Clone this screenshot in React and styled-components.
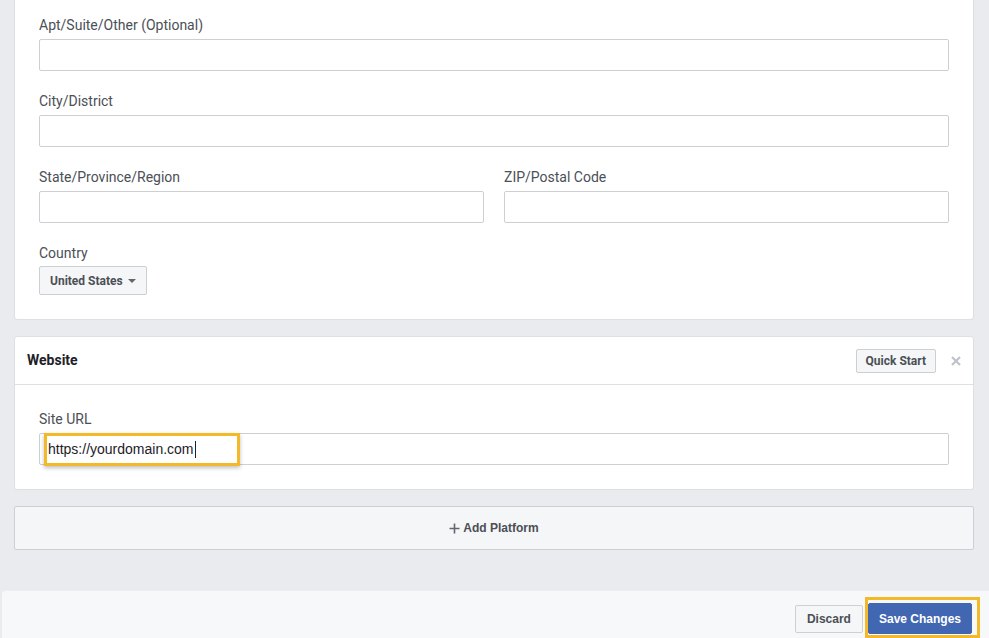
import React from 'react'
import styled, { createGlobalStyle } from 'styled-components'

const GlobalStyle = createGlobalStyle`
  body {
    margin: 0;
    background: #e9ebee;
    font-family: Roboto, "Liberation Sans", Arial, sans-serif;
    color: #4b4f56;
  }
`

const Page = styled.div`
  padding: 0 15px 0 14px;
`

const Card = styled.section`
  background: #fff;
  border: 1px solid #dddfe2;
  border-top: ${p => (p.$cut ? 'none' : '1px solid #dddfe2')};
  border-radius: ${p => (p.$cut ? '0 0 3px 3px' : '3px')};
  margin-top: ${p => (p.$cut ? '0' : '16px')};
`

const CardBody = styled.div`
  padding: ${p => p.$top || 24}px 24px 24px;
  display: flex;
  flex-direction: column;
  gap: 21px;
`

const CardHeader = styled.header`
  height: 47px;
  display: flex;
  align-items: center;
  padding: 0 11px 0 12px;
  border-bottom: 1px solid #dddfe2;
`

const HeaderTitle = styled.h3`
  flex: 1;
  margin: 0 0 1px;
  font-size: 14px;
  font-weight: 700;
  color: #1d2129;
`

const Row = styled.div`
  display: grid;
  grid-template-columns: 1fr 1fr;
  gap: 20px;
`

const Field = styled.div`
  display: flex;
  flex-direction: column;
  gap: ${p => p.$gap || 5}px;
`

const Label = styled.label`
  font-size: 14px;
  line-height: 18px;
  color: #4b4f56;
`

const Input = styled.div`
  position: relative;
  height: 30px;
  border: 1px solid #ccd0d5;
  border-radius: 2px;
  background: #fff;
  display: flex;
  align-items: center;
  padding: 0 8px;
  font-family: "Liberation Sans", Arial, sans-serif;
  font-size: 14px;
  color: #1d2129;
`

const Caret = styled.span`
  display: inline-block;
  width: 1px;
  height: 17px;
  background: #1d2129;
  margin-left: 1px;
`

/* yellow callout drawn over the field it points at */
const Callout = styled.span`
  position: absolute;
  left: 4px;
  top: -1px;
  width: 190px;
  height: 27px;
  border: 3px solid #f3b928;
  box-shadow: 0 2px 4px rgba(0, 0, 0, 0.25);
  pointer-events: none;
`

const Button = styled.button`
  height: ${p => p.$h || 24}px;
  padding: 0 ${p => p.$px || 8}px;
  margin: 0;
  border: 1px solid ${p => (p.$primary ? '#4267b2' : '#ccd0d5')};
  border-radius: 2px;
  background: ${p => (p.$primary ? '#4267b2' : '#f5f6f7')};
  color: ${p => (p.$primary ? '#fff' : '#4b4f56')};
  font-family: ${p => (p.$arial ? '"Liberation Sans", Arial' : 'Roboto, "Liberation Sans"')}, sans-serif;
  font-size: 12px;
  font-weight: 700;
  display: inline-flex;
  align-items: center;
  gap: 5px;
  cursor: pointer;
`

const SelectWrap = styled.div`
  display: flex;
`

const Arrow = styled.span`
  width: 0;
  height: 0;
  border-left: 4px solid transparent;
  border-right: 4px solid transparent;
  border-top: 4px solid #606770;
`

const Close = styled.span`
  margin-left: 14px;
  width: 12px;
  display: flex;
  justify-content: center;
`

const AddPlatform = styled.button`
  margin-top: 16px;
  width: 100%;
  height: 44px;
  border: 1px solid #ccd0d5;
  border-radius: 2px;
  background: #f5f6f7;
  color: #4b4f56;
  font-family: "Liberation Sans", Arial, sans-serif;
  font-size: 12px;
  font-weight: 700;
  display: flex;
  align-items: center;
  justify-content: center;
  gap: 3px;
`

const Footer = styled.footer`
  margin: 40px 0 0 2px;
  height: 48px;
  background: #f7f8fa;
  border-top: 1px solid #eceef1;
  border-radius: 4px 0 0 0;
  display: flex;
  align-items: flex-start;
  justify-content: flex-end;
  gap: 2px;
  padding: 6px 9px 0 0;
  box-sizing: border-box;
`

const Highlight = styled.span`
  border: 3px solid #f3b928;
  padding: 3px 5px 1px 0;
  display: flex;
`

const DiscardWrap = styled.span`
  padding-top: 8px;
  display: flex;
`

function App() {
  return (
    <>
      <GlobalStyle />
      <Page>
        <Card $cut>
          <CardBody $top={16}>
            <Field>
              <Label>Apt/Suite/Other (Optional)</Label>
              <Input />
            </Field>
            <Field>
              <Label>City/District</Label>
              <Input />
            </Field>
            <Row>
              <Field>
                <Label>State/Province/Region</Label>
                <Input />
              </Field>
              <Field>
                <Label>ZIP/Postal Code</Label>
                <Input />
              </Field>
            </Row>
            <Field $gap={4}>
              <Label>Country</Label>
              <SelectWrap>
                <Button $h={29} $px={10}>
                  United States <Arrow />
                </Button>
              </SelectWrap>
            </Field>
          </CardBody>
        </Card>

        <Card>
          <CardHeader>
            <HeaderTitle>Website</HeaderTitle>
            <Button $px={9}>Quick Start</Button>
            <Close>
              <svg width="10" height="10" viewBox="0 0 10 10">
                <path d="M1 1L9 9M9 1L1 9" stroke="#bec3c9" strokeWidth="2.2" />
              </svg>
            </Close>
          </CardHeader>
          <CardBody $top={25}>
            <Field>
              <Label>Site URL</Label>
              <Input>
                https://yourdomain.com<Caret />
                <Callout />
              </Input>
            </Field>
          </CardBody>
        </Card>

        <AddPlatform>
          <svg width="11" height="11" viewBox="0 0 11 11">
            <path d="M5.5 0.5V10.5M0.5 5.5H10.5" stroke="#606770" strokeWidth="1.6" />
          </svg>
          Add Platform
        </AddPlatform>
      </Page>

      <Footer>
        <DiscardWrap>
          <Button $h={28} $px={11} $arial>Discard</Button>
        </DiscardWrap>
        <Highlight>
          <Button $primary $h={31} $px={10} $arial>Save Changes</Button>
        </Highlight>
      </Footer>
    </>
  )
}

export default App
